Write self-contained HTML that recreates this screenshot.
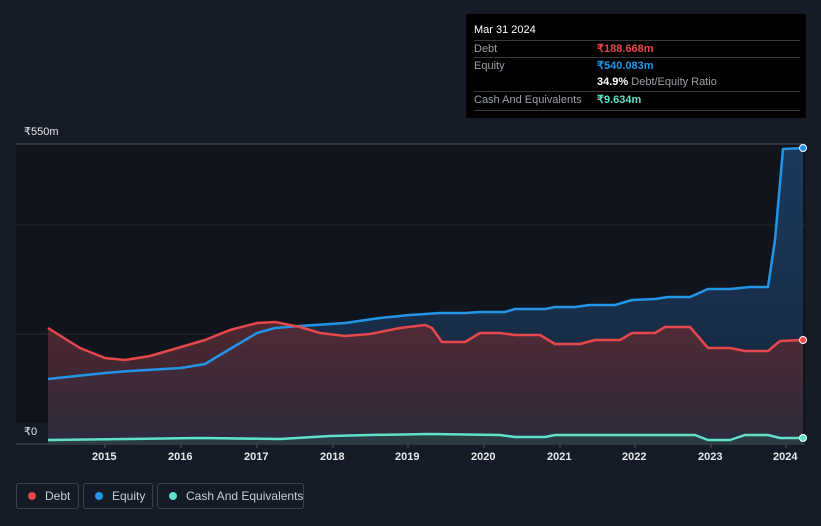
<!DOCTYPE html>
<html><head><style>
body{margin:0;width:821px;height:526px;background:#151b26;font-family:"Liberation Sans",sans-serif;overflow:hidden;position:relative}
.tt{position:absolute;left:466px;top:14px;width:340px;height:104px;background:#000;color:#fff;font-size:11px}
.tt .r{position:absolute;left:8px;width:326px;border-top:1px solid #3a3a3a;height:17px;line-height:17px;color:#9aa0a6}
.leg{position:absolute;top:483px;height:26px;border:1px solid #3a404c;border-radius:3px;color:#c9cdd3;font-size:12px;line-height:24px;box-sizing:border-box;white-space:nowrap}
.leg i{position:absolute;left:11px;top:8px;width:8px;height:8px;border-radius:50%}
.yr{position:absolute;top:451px;color:#e6e8eb;font-size:11px;font-weight:bold}
</style></head><body>
<svg width="821" height="526" style="position:absolute;left:0;top:0">
<defs>
<linearGradient id="eq" x1="0" y1="0" x2="0" y2="1"><stop offset="0" stop-color="#1b3a5c"/><stop offset="1" stop-color="#17243a"/></linearGradient>
<linearGradient id="db" x1="0" y1="0" x2="0" y2="1"><stop offset="0" stop-color="#5a2a33"/><stop offset="1" stop-color="#302c3a"/></linearGradient>
</defs>
<rect x="16" y="144" width="789" height="300" fill="#10141c"/>
<line x1="16" y1="144" x2="805" y2="144" stroke="#4a505a"/>
<line x1="16" y1="225" x2="805" y2="225" stroke="#262b35"/>
<line x1="16" y1="334" x2="805" y2="334" stroke="#262b35"/>
<line x1="16" y1="444" x2="805" y2="444" stroke="#4a505a"/>
<path d="M48,379 L105,373 L130,371 L181,368 L205,364 L230,349 L257,333 L275,328 L300,326 L345,323 L380,318 L410,315 L440,313 L465,313 L480,312 L505,312 L515,309 L545,309 L555,307 L575,307 L590,305 L615,305 L632,300 L655,299 L668,297 L690,297 L708,289 L730,289 L750,287 L768,287 L775,240 L783,149 L803,148 L803,444 L48,444Z" fill="url(#eq)"/>
<path d="M48,328 L80,348 L105,358 L125,360 L150,356 L181,347 L205,340 L230,330 L257,323 L275,322 L300,327 L320,333 L345,336 L370,334 L400,328 L425,325 L432,328 L442,342 L465,342 L480,333 L500,333 L515,335 L540,335 L555,344 L580,344 L595,340 L620,340 L632,333 L655,333 L665,327 L690,327 L708,348 L730,348 L745,351 L768,351 L780,341 L803,340 L803,444 L48,444Z" fill="url(#db)" opacity="0.85"/>
<path d="M48,379 L105,373 L130,371 L181,368 L205,364 L230,349 L257,333 L275,328 L300,326 L345,323 L380,318 L410,315 L440,313 L465,313 L480,312 L505,312 L515,309 L545,309 L555,307 L575,307 L590,305 L615,305 L632,300 L655,299 L668,297 L690,297 L708,289 L730,289 L750,287 L768,287 L775,240 L783,149 L803,148" fill="none" stroke="#2394e6" stroke-width="2.5" stroke-linejoin="round"/>
<path d="M48,328 L80,348 L105,358 L125,360 L150,356 L181,347 L205,340 L230,330 L257,323 L275,322 L300,327 L320,333 L345,336 L370,334 L400,328 L425,325 L432,328 L442,342 L465,342 L480,333 L500,333 L515,335 L540,335 L555,344 L580,344 L595,340 L620,340 L632,333 L655,333 L665,327 L690,327 L708,348 L730,348 L745,351 L768,351 L780,341 L803,340" fill="none" stroke="#e5474b" stroke-width="2.5" stroke-linejoin="round"/>
<path d="M48,440 L200,438 L280,439 L330,436 L370,435 L430,434 L500,435 L515,437 L545,437 L555,435 L632,435 L655,435 L695,435 L708,440 L730,440 L745,435 L768,435 L780,438 L803,438 L803,444 L48,444Z" fill="#2a4a4a" opacity="0.6"/>
<path d="M48,440 L200,438 L280,439 L330,436 L370,435 L430,434 L500,435 L515,437 L545,437 L555,435 L632,435 L655,435 L695,435 L708,440 L730,440 L745,435 L768,435 L780,438 L803,438" fill="none" stroke="#5fe0c8" stroke-width="2.5" stroke-linejoin="round"/>
<circle cx="803" cy="148" r="3.5" fill="#2394e6" stroke="#fff" stroke-width="1"/>
<circle cx="803" cy="340" r="3.5" fill="#e5474b" stroke="#fff" stroke-width="1"/>
<circle cx="803" cy="438" r="3.5" fill="#5fe0c8" stroke="#fff" stroke-width="1"/>
<g stroke="#4a505a"><line x1="105" y1="444" x2="105" y2="448"/><line x1="181" y1="444" x2="181" y2="448"/><line x1="257" y1="444" x2="257" y2="448"/><line x1="333" y1="444" x2="333" y2="448"/><line x1="408" y1="444" x2="408" y2="448"/><line x1="484" y1="444" x2="484" y2="448"/><line x1="560" y1="444" x2="560" y2="448"/><line x1="635" y1="444" x2="635" y2="448"/><line x1="711" y1="444" x2="711" y2="448"/><line x1="786" y1="444" x2="786" y2="448"/></g>
</svg>
<div style="position:absolute;left:24px;top:125px;color:#e6e8eb;font-size:11px">₹550m</div>
<div style="position:absolute;left:16px;top:423px;width:32px;height:20px;background:#151b26;color:#e6e8eb;font-size:11px;line-height:18px;padding-left:8px;box-sizing:border-box">₹0</div>
<div class="yr" style="left:92px">2015</div><div class="yr" style="left:168px">2016</div><div class="yr" style="left:244px">2017</div><div class="yr" style="left:320px">2018</div><div class="yr" style="left:395px">2019</div><div class="yr" style="left:471px">2020</div><div class="yr" style="left:547px">2021</div><div class="yr" style="left:622px">2022</div><div class="yr" style="left:698px">2023</div><div class="yr" style="left:773px">2024</div>
<div class="tt">
<div style="position:absolute;left:8px;top:10px;font-size:11px">Mar 31 2024</div>
<div class="r" style="top:26px">Debt<span style="position:absolute;left:123px;color:#e5474b;font-weight:bold">₹188.668m</span></div>
<div class="r" style="top:43px">Equity<span style="position:absolute;left:123px;color:#2394e6;font-weight:bold">₹540.083m</span></div>
<div class="r" style="top:60px;border-top:none"><span style="position:absolute;left:123px"><b style="color:#fff">34.9%</b> Debt/Equity Ratio</span></div>
<div class="r" style="top:77px">Cash And Equivalents<span style="position:absolute;left:123px;color:#5fe0c8;font-weight:bold">₹9.634m</span></div>
<div style="position:absolute;left:8px;top:96px;width:326px;border-top:1px solid #3a3a3a"></div>
</div>
<div class="leg" style="left:16px;width:63px"><i style="background:#e5474b"></i><span style="position:absolute;left:28px">Debt</span></div>
<div class="leg" style="left:83px;width:70px"><i style="background:#2394e6"></i><span style="position:absolute;left:28px">Equity</span></div>
<div class="leg" style="left:157px;width:147px"><i style="background:#5fe0c8"></i><span style="position:absolute;left:28px">Cash And Equivalents</span></div>
</body></html>
